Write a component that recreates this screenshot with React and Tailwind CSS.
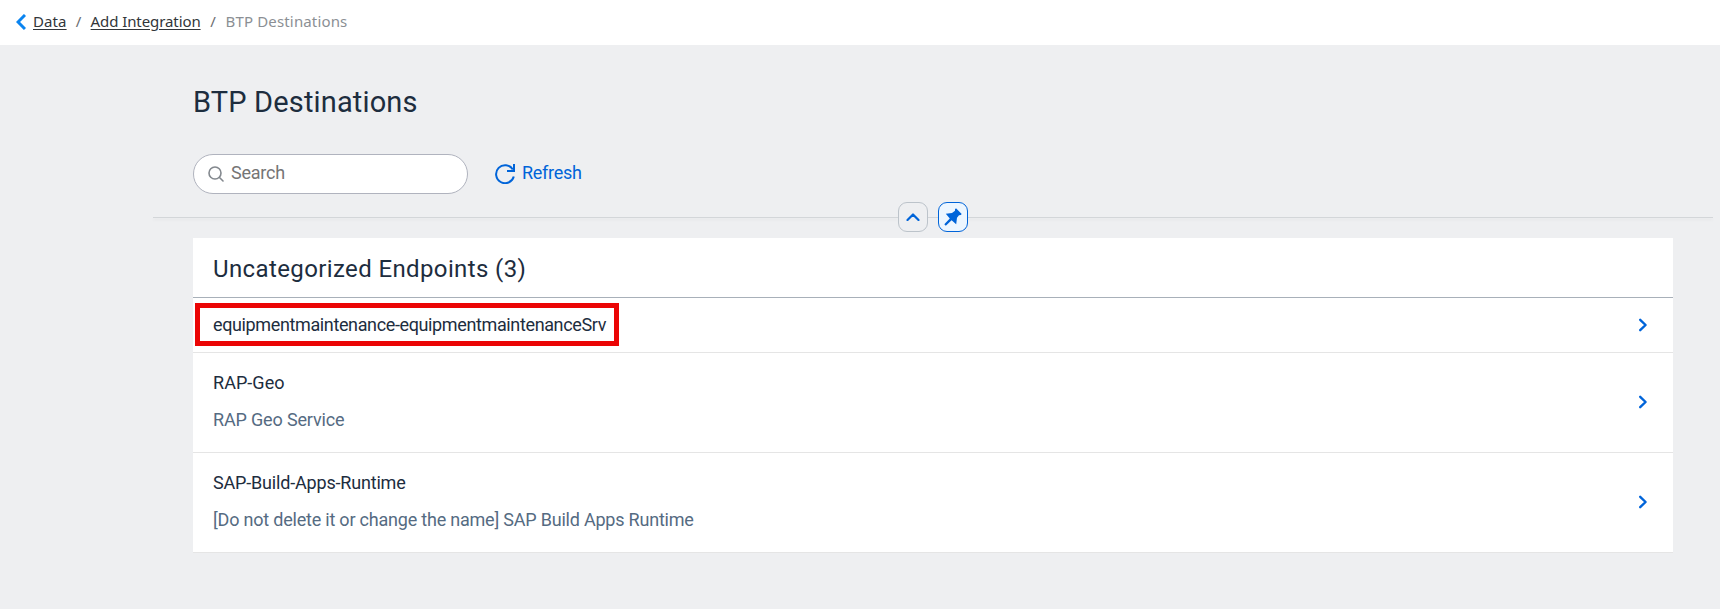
const endpoints = [
  { name: "equipmentmaintenance-equipmentmaintenanceSrv", nameClass: "tracking-[-0.37px]", highlighted: true },
  { name: "RAP-Geo", nameClass: "tracking-[0.05px]", description: "RAP Geo Service", descriptionClass: "tracking-[-0.16px]" },
  {
    name: "SAP-Build-Apps-Runtime",
    nameClass: "tracking-[-0.18px]",
    description: "[Do not delete it or change the name] SAP Build Apps Runtime",
    descriptionClass: "tracking-[-0.21px]",
  },
];

function Breadcrumb() {
  return (
    <nav className="flex h-[45px] items-center bg-white pb-0.5 pl-4 font-['Noto_Sans','Liberation_Sans',sans-serif] text-[15px] text-[#32363a]">
      <svg className="mt-px mr-[7px] h-4 w-2.5" viewBox="0 0 10 16" fill="none" stroke="#0a84f0" strokeWidth="3">
        <path d="M9 1 2 8l7 7" />
      </svg>
      <a className="tracking-[0.1px] underline underline-offset-2">Data</a>
      <span className="w-6 text-center text-[#6a6d70]">/</span>
      <a className="tracking-[-0.09px] underline underline-offset-2">Add Integration</a>
      <span className="w-[25px] text-center text-[#6a6d70]">/</span>
      <span className="tracking-[0.15px] text-[#8b8f94]">BTP Destinations</span>
    </nav>
  );
}

function Toolbar() {
  return (
    <div className="mt-[34px] flex h-10 items-center text-[18px]">
      <div className="flex h-10 w-[275px] items-center rounded-full border border-[#b0b3be] bg-white pl-[14px]">
        <svg className="mr-[7px] h-4 w-4" viewBox="0 0 16 16" fill="none" stroke="#83888e" strokeWidth="1.6" strokeLinecap="round">
          <circle cx="7" cy="7" r="6" />
          <path d="m11.5 11.5 3.5 3.5" />
        </svg>
        <span className="pb-1 tracking-[-0.25px] text-[#757575]">Search</span>
      </div>
      <button className="ml-[27px] flex items-center text-[#0064d9]">
        <svg className="mr-[7px] h-5 w-5" viewBox="0 0 20 20" fill="none" stroke="currentColor" strokeWidth="2">
          <path d="M18.8 12.5A9 9 0 1 1 17.8 5.5" />
          <path d="M19 0v7h-7" />
        </svg>
        <span className="pb-[3px] tracking-[-0.28px]">Refresh</span>
      </button>
    </div>
  );
}

function HeaderDivider() {
  return (
    <div className="mr-[7px] ml-[153px] flex h-[30px] items-center">
      <div className="h-px w-[745px] bg-[#d3d6d9] shadow-[0_2px_3px_rgba(0,0,0,0.06)]" />
      <button className="flex h-[30px] w-[30px] items-center justify-center rounded-[9px] border border-[#bcc3ca]">
        <svg className="h-2 w-3.5" viewBox="0 0 14 8" fill="none" stroke="#0064d9" strokeWidth="2.2" strokeLinecap="round" strokeLinejoin="round">
          <path d="m1.5 7 5.5-5.5L12.5 7" />
        </svg>
      </button>
      <div className="h-px w-2.5 bg-[#d3d6d9]" />
      <button className="flex h-[30px] w-[30px] items-center justify-center rounded-[9px] border border-[#0064d9] bg-[#edf6ff]">
        <svg className="h-[18px] w-[18px]" viewBox="0 0 18 18" fill="#0064d9">
          <path d="M12 .3 17.7 6 16.8 7 15 7.2 13 9.8 12.2 16.2 7.6 12.2 1.8 17.8.3 16.3 5.8 10.6 1.8 5.8 8 5 11 2.8V1.2Z" />
        </svg>
      </button>
      <div className="h-px flex-1 bg-[#d3d6d9] shadow-[0_2px_3px_rgba(0,0,0,0.06)]" />
    </div>
  );
}

function EndpointRow({ endpoint }) {
  return (
    <li
      className={`flex items-center border-b border-[#e5e5e5] pr-[25px] pl-5 text-[18px] leading-[37px] ${
        endpoint.highlighted ? "h-[55px]" : "h-[100px]"
      }`}
    >
      <div className={endpoint.highlighted ? "flex-1 pb-px" : "flex-1 pb-[3px]"}>
        <div className="flex">
          <div
            className={
              endpoint.highlighted
                ? "-ml-[18px] flex h-[43px] w-[424px] items-center border-5 border-[#eb0505] pb-px pl-[13px]"
                : ""
            }
          >
            <span className={`whitespace-nowrap text-[#1d2d3e] ${endpoint.nameClass}`}>{endpoint.name}</span>
          </div>
        </div>
        {endpoint.description && (
          <p className={`text-[#556b82] ${endpoint.descriptionClass}`}>{endpoint.description}</p>
        )}
      </div>
      <svg className="mb-px h-3.5 w-2.5" viewBox="0 0 10 14" fill="none" stroke="#0064d9" strokeWidth="2.4" strokeLinecap="round" strokeLinejoin="round">
        <path d="m2.2 1.8 5.4 5.2-5.4 5.2" />
      </svg>
    </li>
  );
}

export default function App() {
  return (
    <div className="h-[609px] bg-[#eeeff1] font-['Roboto','Liberation_Sans',sans-serif]">
      <Breadcrumb />
      <header className="h-[157px] pt-[39px] pl-[193px]">
        <h1 className="text-[29px] leading-9 tracking-[0.15px] text-[#1d2d3e]">BTP Destinations</h1>
        <Toolbar />
      </header>
      <HeaderDivider />
      <section className="mt-1.5 mr-[47px] ml-[193px] bg-white">
        <h2 className="flex h-[60px] items-center border-b border-[#a8b0b9] pt-0.5 pl-5 text-[24px] tracking-[0.38px] text-[#1d2d3e]">
          Uncategorized Endpoints (3)
        </h2>
        <ul>
          {endpoints.map((endpoint) => (
            <EndpointRow key={endpoint.name} endpoint={endpoint} />
          ))}
        </ul>
      </section>
    </div>
  );
}
